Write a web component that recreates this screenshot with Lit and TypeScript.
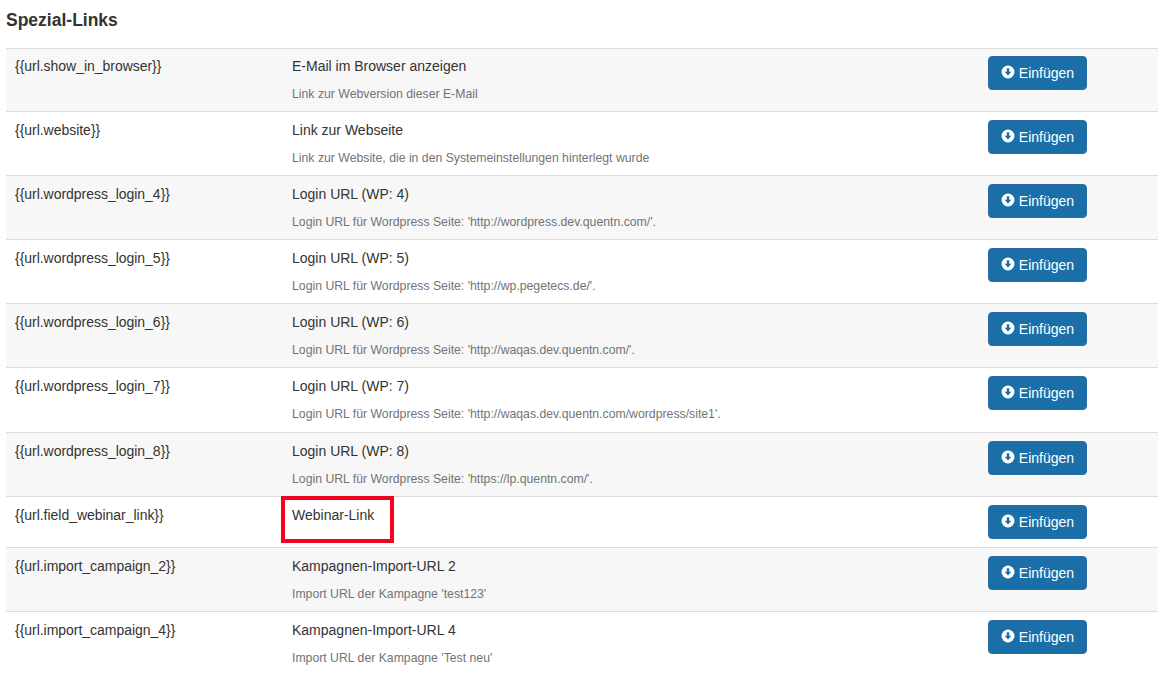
import { LitElement, html, css } from "lit";
import { customElement } from "lit/decorators.js";

const rows = [
  ["{{url.show_in_browser}}", "E-Mail im Browser anzeigen", "Link zur Webversion dieser E-Mail"],
  ["{{url.website}}", "Link zur Webseite", "Link zur Website, die in den Systemeinstellungen hinterlegt wurde"],
  ["{{url.wordpress_login_4}}", "Login URL (WP: 4)", "Login URL für Wordpress Seite: 'http://wordpress.dev.quentn.com/'."],
  ["{{url.wordpress_login_5}}", "Login URL (WP: 5)", "Login URL für Wordpress Seite: 'http://wp.pegetecs.de/'."],
  ["{{url.wordpress_login_6}}", "Login URL (WP: 6)", "Login URL für Wordpress Seite: 'http://waqas.dev.quentn.com/'."],
  ["{{url.wordpress_login_7}}", "Login URL (WP: 7)", "Login URL für Wordpress Seite: 'http://waqas.dev.quentn.com/wordpress/site1'."],
  ["{{url.wordpress_login_8}}", "Login URL (WP: 8)", "Login URL für Wordpress Seite: 'https://lp.quentn.com/'."],
  ["{{url.field_webinar_link}}", "Webinar-Link", ""],
  ["{{url.import_campaign_2}}", "Kampagnen-Import-URL 2", "Import URL der Kampagne 'test123'"],
  ["{{url.import_campaign_4}}", "Kampagnen-Import-URL 4", "Import URL der Kampagne 'Test neu'"],
];

@customElement("app-root")
export class AppRoot extends LitElement {
  static styles = css`
    :host {
      display: block;
      width: 1158px;
      height: 688px;
      overflow: hidden;
      background: #fff;
      font-family: "Liberation Sans", Arial, sans-serif;
      font-size: 14px;
      color: #333;
      box-sizing: border-box;
      padding-left: 6px;
    }
    h2 {
      margin: 0;
      height: 48px;
      padding-top: 10px;
      box-sizing: border-box;
      font-size: 17.5px;
      line-height: 20px;
      font-weight: 700;
      color: #333;
    }
    .row {
      display: grid;
      grid-template-columns: 277px 696px 1fr;
      height: 64px;
      box-sizing: border-box;
      border-top: 1px solid #ddd;
      padding: 8px 0 0 9px;
    }
    .row.odd { background: #f7f7f7; }
    .row.first { height: 63px; padding-top: 7px; }
    .row.tall { height: 65px; }
    .row.short { height: 51px; background: #fff; }
    .key, .title { line-height: 20px; }
    .key { letter-spacing: -0.03px; }
    .desc {
      margin-top: 10px;
      font-size: 12.25px;
      line-height: 17px;
      color: #737373;
    }
    .cell-title { position: relative; }
    .mark {
      position: absolute;
      left: -11px;
      top: -9px;
      width: 113px;
      height: 47px;
      border: 4px solid #f5001f;
      box-sizing: border-box;
      pointer-events: none;
    }
    button {
      display: flex;
      align-items: center;
      justify-content: center;
      gap: 4px;
      width: 99px;
      height: 34px;
      padding: 0 0 1px;
      border: 1px solid #2e6da4;
      border-radius: 4px;
      background: #1a6fa9;
      color: #fff;
      font: 14px "Liberation Sans", Arial, sans-serif;
    }
    svg { width: 14px; height: 14px; display: block; margin-top: -2px; }
  `;

  render() {
    return html`
      <h2>Spezial-Links</h2>
      ${rows.map((r, i) => html`
        <div class="row ${i % 2 === 0 ? "odd" : ""} ${i === 0 ? "first" : ""} ${i === 5 ? "tall" : ""} ${r[2] ? "" : "short"}">
          <div class="key">${r[0]}</div>
          <div class="cell-title">
            <div class="title">${r[1]}</div>
            ${r[2] ? html`<div class="desc">${r[2]}</div>` : html`<div class="mark"></div>`}
          </div>
          <div>
            <button>
              <svg viewBox="0 0 14 14"><circle cx="7" cy="7" r="6.5" fill="#fff"/><path d="M5.8 3.2h2.4v3.6h2.1L7 10.4 3.7 6.8h2.1z" fill="#1a6fa9"/></svg>
              <span>Einfügen</span>
            </button>
          </div>
        </div>`)}
    `;
  }
}
